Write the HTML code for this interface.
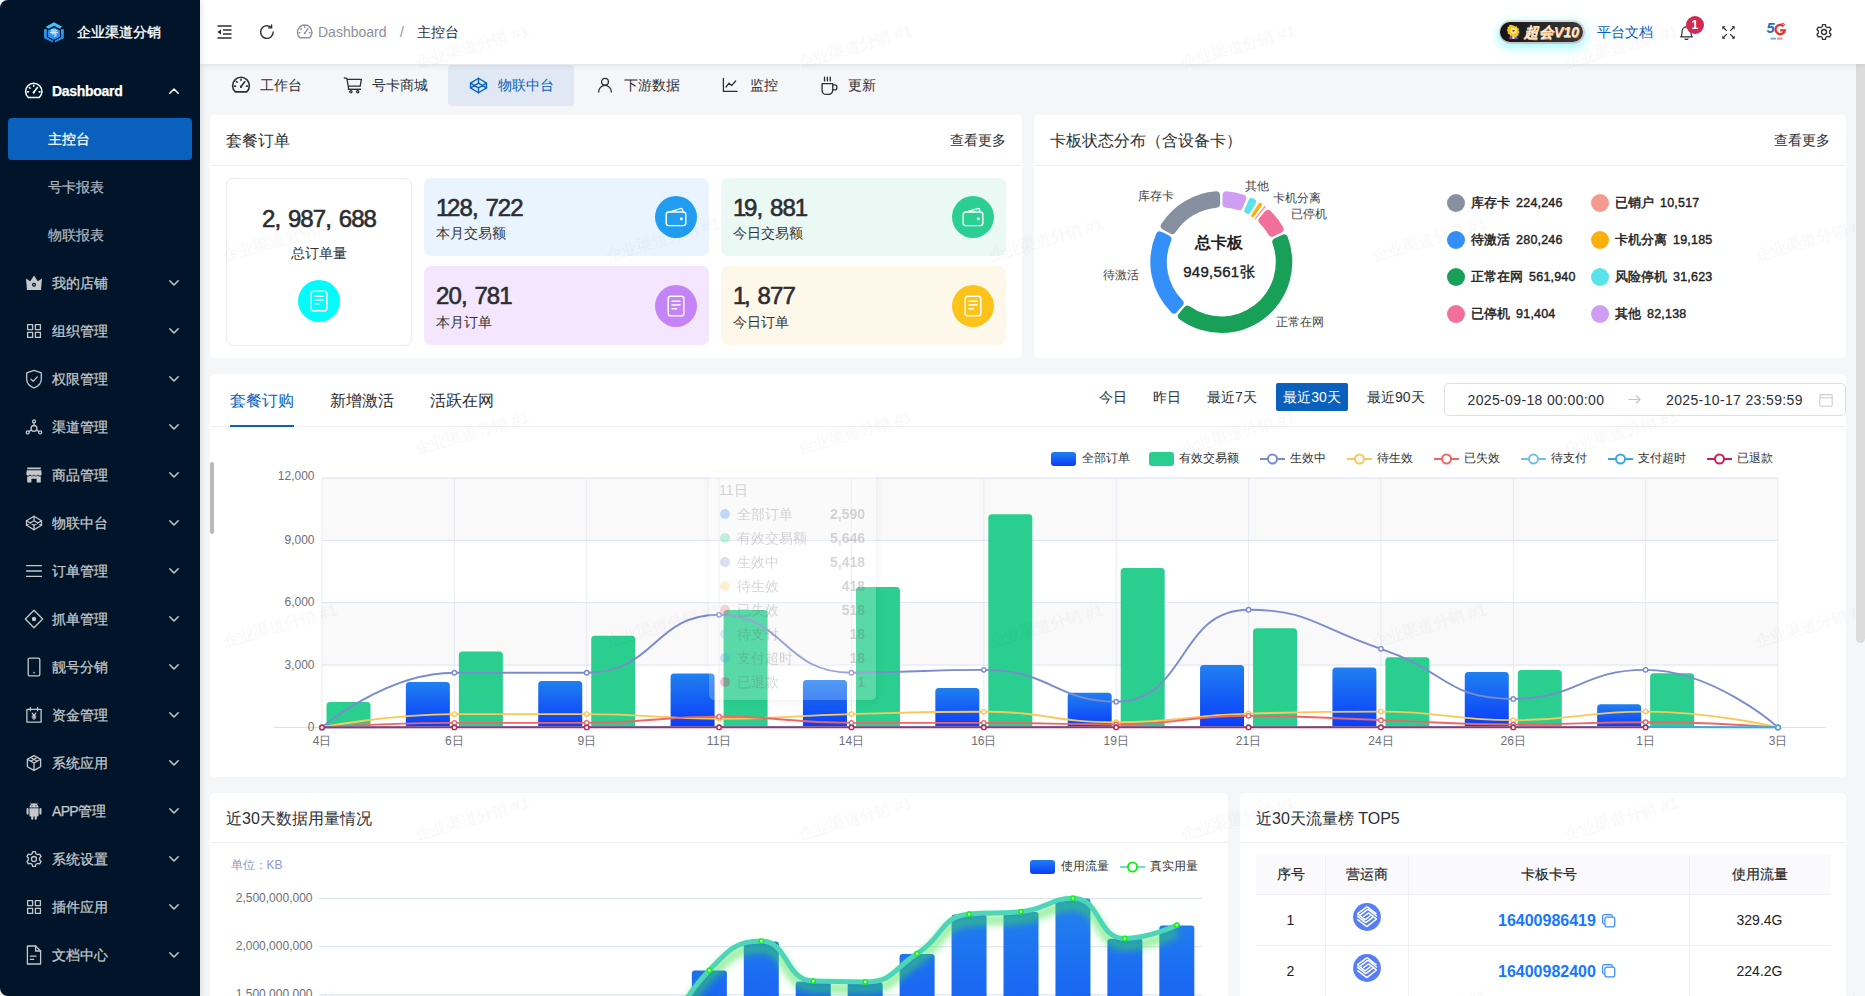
<!DOCTYPE html>
<html lang="zh">
<head>
<meta charset="utf-8">
<title>Dashboard</title>
<style>
*{box-sizing:border-box;margin:0;padding:0}
html,body{width:1865px;height:996px;overflow:hidden}html{background:#f4f4f4}
body{font-family:"Liberation Sans",sans-serif;font-size:14px;color:#2c2f36;background:#f5f6f8;position:relative}
.abs{position:absolute}
svg{display:block;overflow:visible}
/* sidebar */
#side{position:absolute;left:0;top:0;width:200px;height:996px;background:#001529;border-radius:8px 0 0 8px;box-shadow:2px 0 6px rgba(0,21,41,.10);z-index:5}
#side .logo{position:absolute;left:44px;top:21.5px;width:20px;height:21px}
#side .brand{position:absolute;left:77px;top:22px;height:20px;line-height:20px;font-size:14px;color:#fff;white-space:nowrap;-webkit-text-stroke:0.35px #fff}
.mi{position:absolute;left:0;width:200px;height:48px;color:#c6c8cb}
.mi .ic{position:absolute;left:26px;top:16px;width:16px;height:16px}
.mi .tx{position:absolute;left:52px;top:14px;line-height:20px;font-size:14px;white-space:nowrap;-webkit-text-stroke:0.25px currentColor}
.mi .ch{position:absolute;left:169px;top:21px;width:10px;height:6px}
.mi.sub .tx{left:48px;color:#b0b4ba}
.mi.act{left:8px;width:184px;height:42px;background:#0960bd;border-radius:4px;top:118px}
.mi.act .tx{left:40px;top:11px;color:#fff}
/* header */
#hdr{position:absolute;left:200px;top:0;width:1665px;height:64px;background:#fff;box-shadow:0 1px 5px rgba(0,21,41,.10);z-index:3}
.card{position:absolute;background:#fff;border-radius:4px}
.ctitle{position:absolute;left:16px;top:14px;font-size:16px;line-height:22px;color:#2c2f36;white-space:nowrap}
.cmore{position:absolute;right:16px;top:14px;font-size:14px;line-height:20px;color:#2c2f36;white-space:nowrap}
.cdiv{position:absolute;left:0;right:0;top:49px;height:1px;background:#eef0f4}
.t{position:absolute;white-space:nowrap}
</style>
</head>
<body>
<div id="side">
<div class="logo"><svg viewBox="0 0 20 21" width="20" height="21"><defs><linearGradient id="lg1" x1="0" y1="0" x2="0" y2="1"><stop offset="0" stop-color="#2fa8fb"/><stop offset="1" stop-color="#1c84f2"/></linearGradient></defs><path fill="#3cc6ff" d="M1.900 4.800 L9.950 0.300 L18.100 4.800 L15.800 6.800 L9.950 3.700 L4.200 6.800 Z"/><path fill="url(#lg1)" d="M0.100 7.300 H2.800 V15.300 L9 18.400 V20.600 L0.100 16.200 Z M19.800 7.300 H17.100 V15.300 L10.900 18.400 V20.600 L19.800 16.200 Z"/><path fill="#2b93f5" d="M9.950 5.500 L15.900 8.600 V14.700 L9.950 17.800 L4 14.700 V8.600 Z"/><path fill="none" stroke="#e8f4ff" stroke-width="0.950" stroke-linejoin="round" stroke-linecap="round" d="M7.700 7.900h4.600v1.300H7.700z M6.400 10.600h7.200 M8.100 10.600 V11.900 H12.100 Q12.700 14.100 10.500 14.500"/></svg></div><div class="brand">企业渠道分销</div>
<div class="mi" style="top:67px;color:#fff"><div class="ic" style="left:24.300px;top:13.800px;width:19.500px;height:19.500px"><svg viewBox="0 0 16 16" width="100%" height="100%" ><path fill="none" stroke="currentColor" stroke-width="1.3" stroke-linecap="round" stroke-linejoin="round" d="M3.500 13.500 A6.700 6.700 0 1 1 12.500 13.500 Z"/><path fill="none" stroke="currentColor" stroke-width="1.3" stroke-linecap="round" stroke-linejoin="round" d="M8 9.300 L11 5.400"/><circle cx="8" cy="9.400" r="0.950" fill="currentColor"/><path fill="none" stroke="currentColor" stroke-width="1.3" stroke-linecap="round" stroke-linejoin="round" stroke-width="1" d="M8 3.500v.7M4.400 5.300l.5.5M2.900 8.900h.7M12.400 8.900h.7"/></svg></div><div class="tx" style="font-weight:bold;letter-spacing:-0.3px">Dashboard</div><div class="ch"><svg viewBox="0 0 10 6" width="100%" height="100%"><path fill="none" stroke="currentColor" stroke-width="1.5" stroke-linecap="round" stroke-linejoin="round" d="M0.8 5.2 L5 1 L9.2 5.2"/></svg></div></div>
<div class="mi act"><div class="tx">主控台</div></div>
<div class="mi sub" style="top:163px"><div class="tx">号卡报表</div></div>
<div class="mi sub" style="top:211px"><div class="tx">物联报表</div></div>
<div class="mi" style="top:259px"><div class="ic"><svg viewBox="0 0 16 16" width="100%" height="100%" ><path fill="currentColor" d="M0 3.400 L4.200 6.300 L8 0.600 L11.800 6.300 L16 3.400 L15 14.900 H1 Z"/><circle cx="8" cy="9.800" r="2" fill="#001529"/><circle cx="8" cy="9.800" r="0.800" fill="currentColor"/></svg></div><div class="tx">我的店铺</div><div class="ch"><svg viewBox="0 0 10 6" width="100%" height="100%"><path fill="none" stroke="currentColor" stroke-width="1.5" stroke-linecap="round" stroke-linejoin="round" d="M0.8 0.8 L5 5 L9.2 0.8"/></svg></div></div>
<div class="mi" style="top:307px"><div class="ic"><svg viewBox="0 0 16 16" width="100%" height="100%" ><rect fill="none" stroke="currentColor" stroke-width="1.3" stroke-linecap="round" stroke-linejoin="round" x="1.6" y="1.6" width="5" height="5"/><rect fill="none" stroke="currentColor" stroke-width="1.3" stroke-linecap="round" stroke-linejoin="round" x="9.4" y="1.6" width="5" height="5"/><rect fill="none" stroke="currentColor" stroke-width="1.3" stroke-linecap="round" stroke-linejoin="round" x="1.6" y="9.4" width="5" height="5"/><rect fill="none" stroke="currentColor" stroke-width="1.3" stroke-linecap="round" stroke-linejoin="round" x="9.4" y="9.4" width="5" height="5"/></svg></div><div class="tx">组织管理</div><div class="ch"><svg viewBox="0 0 10 6" width="100%" height="100%"><path fill="none" stroke="currentColor" stroke-width="1.5" stroke-linecap="round" stroke-linejoin="round" d="M0.8 0.8 L5 5 L9.2 0.8"/></svg></div></div>
<div class="mi" style="top:355px"><div class="ic"><svg viewBox="0 0 16 16" width="100%" height="100%" ><path fill="none" stroke="currentColor" stroke-width="1.3" stroke-linecap="round" stroke-linejoin="round" d="M8 -0.600 L15.300 1.800 V8.200 C15.300 12.300 12 15.300 8 17 C4 15.300 0.700 12.300 0.700 8.200 V1.800 Z"/><path fill="none" stroke="currentColor" stroke-width="1.3" stroke-linecap="round" stroke-linejoin="round" d="M4.900 8.100 L7.200 10.400 L11.300 5.900"/></svg></div><div class="tx">权限管理</div><div class="ch"><svg viewBox="0 0 10 6" width="100%" height="100%"><path fill="none" stroke="currentColor" stroke-width="1.5" stroke-linecap="round" stroke-linejoin="round" d="M0.8 0.8 L5 5 L9.2 0.8"/></svg></div></div>
<div class="mi" style="top:403px"><div class="ic"><svg viewBox="0 0 16 16" width="100%" height="100%" ><circle fill="none" stroke="currentColor" stroke-width="1.3" stroke-linecap="round" stroke-linejoin="round" cx="8" cy="2.400" r="1.500"/><circle fill="none" stroke="currentColor" stroke-width="1.3" stroke-linecap="round" stroke-linejoin="round" cx="1.800" cy="13.400" r="1.500"/><circle fill="none" stroke="currentColor" stroke-width="1.3" stroke-linecap="round" stroke-linejoin="round" cx="14.200" cy="13.400" r="1.500"/><circle fill="none" stroke="currentColor" stroke-width="1.3" stroke-linecap="round" stroke-linejoin="round" cx="8" cy="9.400" r="2.900"/><path fill="none" stroke="currentColor" stroke-width="1.3" stroke-linecap="round" stroke-linejoin="round" d="M8 3.900v2.600M5.500 10.900l-2.400 1.600M10.500 10.900l2.400 1.600"/></svg></div><div class="tx">渠道管理</div><div class="ch"><svg viewBox="0 0 10 6" width="100%" height="100%"><path fill="none" stroke="currentColor" stroke-width="1.5" stroke-linecap="round" stroke-linejoin="round" d="M0.8 0.8 L5 5 L9.2 0.8"/></svg></div></div>
<div class="mi" style="top:451px"><div class="ic"><svg viewBox="0 0 16 16" width="100%" height="100%" ><path fill="currentColor" d="M1.200 0.500h13.600v1.700H1.200z M0.800 3.300h14.400l0.500 3.400a1.900 1.900 0 0 1-3.800 0.200a1.950 1.950 0 0 1-3.900 0a1.950 1.950 0 0 1-3.900 0a1.900 1.900 0 0 1-3.800-0.200z M1.200 9.400 Q3 9.900 4.400 8.800 Q6 10.100 8 8.800 Q10 10.100 11.600 8.800 Q13 9.900 14.800 9.400 V15.500 H10.600 V11.800 H5.400 V15.500 H1.200 Z"/></svg></div><div class="tx">商品管理</div><div class="ch"><svg viewBox="0 0 10 6" width="100%" height="100%"><path fill="none" stroke="currentColor" stroke-width="1.5" stroke-linecap="round" stroke-linejoin="round" d="M0.8 0.8 L5 5 L9.2 0.8"/></svg></div></div>
<div class="mi" style="top:499px"><div class="ic"><svg viewBox="0 0 16 16" width="100%" height="100%" ><path fill="none" stroke="currentColor" stroke-width="1.3" stroke-linecap="round" stroke-linejoin="round" d="M8 1.200 L15.500 5.700 V10.300 L8 14.800 L0.500 10.300 V5.700 Z"/><path fill="none" stroke="currentColor" stroke-width="1.3" stroke-linecap="round" stroke-linejoin="round" d="M0.500 5.700 L8 10.300 L15.500 5.700 M0.500 10.300 L8 5.700 L15.500 10.300 M8 1.200 V5.700 M8 10.300 V14.800"/></svg></div><div class="tx">物联中台</div><div class="ch"><svg viewBox="0 0 10 6" width="100%" height="100%"><path fill="none" stroke="currentColor" stroke-width="1.5" stroke-linecap="round" stroke-linejoin="round" d="M0.8 0.8 L5 5 L9.2 0.8"/></svg></div></div>
<div class="mi" style="top:547px"><div class="ic"><svg viewBox="0 0 16 16" width="100%" height="100%" ><path fill="none" stroke="currentColor" stroke-width="1.3" stroke-linecap="round" stroke-linejoin="round" stroke-width="1.4" stroke-linecap="butt" d="M0.6 2.6h14.8M0.6 8h14.8M0.6 13.4h14.8"/></svg></div><div class="tx">订单管理</div><div class="ch"><svg viewBox="0 0 10 6" width="100%" height="100%"><path fill="none" stroke="currentColor" stroke-width="1.5" stroke-linecap="round" stroke-linejoin="round" d="M0.8 0.8 L5 5 L9.2 0.8"/></svg></div></div>
<div class="mi" style="top:595px"><div class="ic"><svg viewBox="0 0 16 16" width="100%" height="100%" ><path fill="none" stroke="currentColor" stroke-width="1.3" stroke-linecap="round" stroke-linejoin="round" stroke-width="1.500" d="M8 -0.700 L16.700 8 L8 16.700 L-0.700 8 Z"/><circle cx="8" cy="8" r="2.200" fill="currentColor"/></svg></div><div class="tx">抓单管理</div><div class="ch"><svg viewBox="0 0 10 6" width="100%" height="100%"><path fill="none" stroke="currentColor" stroke-width="1.5" stroke-linecap="round" stroke-linejoin="round" d="M0.8 0.8 L5 5 L9.2 0.8"/></svg></div></div>
<div class="mi" style="top:643px"><div class="ic"><svg viewBox="0 0 16 16" width="100%" height="100%" ><rect fill="none" stroke="currentColor" stroke-width="1.3" stroke-linecap="round" stroke-linejoin="round" x="2.200" y="-0.900" width="11.600" height="17.800" rx="1.500"/><circle cx="8" cy="13.600" r="0.850" fill="currentColor"/></svg></div><div class="tx">靓号分销</div><div class="ch"><svg viewBox="0 0 10 6" width="100%" height="100%"><path fill="none" stroke="currentColor" stroke-width="1.5" stroke-linecap="round" stroke-linejoin="round" d="M0.8 0.8 L5 5 L9.2 0.8"/></svg></div></div>
<div class="mi" style="top:691px"><div class="ic"><svg viewBox="0 0 16 16" width="100%" height="100%" ><rect fill="none" stroke="currentColor" stroke-width="1.3" stroke-linecap="round" stroke-linejoin="round" x="0.900" y="2.400" width="14.200" height="12.800" /><path fill="none" stroke="currentColor" stroke-width="1.3" stroke-linecap="round" stroke-linejoin="round" d="M4.400 0.600v3.200M11.600 0.600v3.200"/><path fill="none" stroke="currentColor" stroke-width="1.3" stroke-linecap="round" stroke-linejoin="round" stroke-width="1" d="M6.200 6.200 L8 8.700 L9.800 6.200 M8 8.700v3.600M6.300 9.200h3.400M6.300 10.800h3.400"/></svg></div><div class="tx">资金管理</div><div class="ch"><svg viewBox="0 0 10 6" width="100%" height="100%"><path fill="none" stroke="currentColor" stroke-width="1.5" stroke-linecap="round" stroke-linejoin="round" d="M0.8 0.8 L5 5 L9.2 0.8"/></svg></div></div>
<div class="mi" style="top:739px"><div class="ic"><svg viewBox="0 0 16 16" width="100%" height="100%" ><path fill="none" stroke="currentColor" stroke-width="1.3" stroke-linecap="round" stroke-linejoin="round" stroke-width="1.400" d="M8 0.600 L14.600 4.300 V11.700 L8 15.400 L1.400 11.700 V4.300 Z"/><path fill="none" stroke="currentColor" stroke-width="1.3" stroke-linecap="round" stroke-linejoin="round" stroke-width="1.400" d="M1.400 4.300 L8 8 L14.600 4.300 M8 8 V15.400 M4.700 2.500 L11.300 6.200 M11.300 2.500 L4.700 6.200"/></svg></div><div class="tx">系统应用</div><div class="ch"><svg viewBox="0 0 10 6" width="100%" height="100%"><path fill="none" stroke="currentColor" stroke-width="1.5" stroke-linecap="round" stroke-linejoin="round" d="M0.8 0.8 L5 5 L9.2 0.8"/></svg></div></div>
<div class="mi" style="top:787px"><div class="ic"><svg viewBox="0 0 16 16" width="100%" height="100%" ><g transform="translate(8 8) scale(1.17) translate(-8 -8)"><path fill="currentColor" d="M4.1 5.6h7.8v6.2a.8.8 0 0 1-.8.8h-.7v2a.9.9 0 0 1-1.8 0v-2H7.4v2a.9.9 0 0 1-1.8 0v-2h-.7a.8.8 0 0 1-.8-.8z M1.6 6.4a.9.9 0 0 1 1.8 0v3.8a.9.9 0 0 1-1.8 0z M12.6 6.4a.9.9 0 0 1 1.8 0v3.8a.9.9 0 0 1-1.8 0z M4.1 5a3.9 3.6 0 0 1 7.8 0z"/><path stroke="currentColor" stroke-width=".7" stroke-linecap="round" d="M5.2 1.2l.8 1.2M10.8 1.2l-.8 1.2"/><circle cx="6.3" cy="3.5" r=".45" fill="#001529"/><circle cx="9.7" cy="3.5" r=".45" fill="#001529"/></g></svg></div><div class="tx"><span style="letter-spacing:-0.7px">APP</span>管理</div><div class="ch"><svg viewBox="0 0 10 6" width="100%" height="100%"><path fill="none" stroke="currentColor" stroke-width="1.5" stroke-linecap="round" stroke-linejoin="round" d="M0.8 0.8 L5 5 L9.2 0.8"/></svg></div></div>
<div class="mi" style="top:835px"><div class="ic"><svg viewBox="0 0 16 16" width="100%" height="100%" ><path fill="none" stroke="currentColor" stroke-width="1.3" stroke-linecap="round" stroke-linejoin="round" d="M9.86 2.61L9.43 0.64L6.57 0.64L6.14 2.61L4.26 3.70L2.34 3.08L0.91 5.56L2.40 6.91L2.40 9.09L0.91 10.44L2.34 12.92L4.26 12.30L6.14 13.39L6.57 15.36L9.43 15.36L9.86 13.39L11.74 12.30L13.66 12.92L15.09 10.44L13.60 9.09L13.60 6.91L15.09 5.56L13.66 3.08L11.74 3.70Z"/><circle fill="none" stroke="currentColor" stroke-width="1.3" stroke-linecap="round" stroke-linejoin="round" cx="8" cy="8" r="2.5"/></svg></div><div class="tx">系统设置</div><div class="ch"><svg viewBox="0 0 10 6" width="100%" height="100%"><path fill="none" stroke="currentColor" stroke-width="1.5" stroke-linecap="round" stroke-linejoin="round" d="M0.8 0.8 L5 5 L9.2 0.8"/></svg></div></div>
<div class="mi" style="top:883px"><div class="ic"><svg viewBox="0 0 16 16" width="100%" height="100%" ><rect fill="none" stroke="currentColor" stroke-width="1.3" stroke-linecap="round" stroke-linejoin="round" x="1.6" y="1.6" width="5" height="5"/><rect fill="none" stroke="currentColor" stroke-width="1.3" stroke-linecap="round" stroke-linejoin="round" x="9.4" y="1.6" width="5" height="5"/><rect fill="none" stroke="currentColor" stroke-width="1.3" stroke-linecap="round" stroke-linejoin="round" x="1.6" y="9.4" width="5" height="5"/><rect fill="none" stroke="currentColor" stroke-width="1.3" stroke-linecap="round" stroke-linejoin="round" x="9.4" y="9.4" width="5" height="5"/></svg></div><div class="tx">插件应用</div><div class="ch"><svg viewBox="0 0 10 6" width="100%" height="100%"><path fill="none" stroke="currentColor" stroke-width="1.5" stroke-linecap="round" stroke-linejoin="round" d="M0.8 0.8 L5 5 L9.2 0.8"/></svg></div></div>
<div class="mi" style="top:931px"><div class="ic"><svg viewBox="0 0 16 16" width="100%" height="100%" ><path fill="none" stroke="currentColor" stroke-width="1.3" stroke-linecap="round" stroke-linejoin="round" d="M1.400 -1h8.200l5 5V17H1.400z"/><path fill="none" stroke="currentColor" stroke-width="1.3" stroke-linecap="round" stroke-linejoin="round" d="M9.600 -1v5h5"/><path fill="none" stroke="currentColor" stroke-width="1.3" stroke-linecap="round" stroke-linejoin="round" d="M4.400 9.200h5.600M4.400 12.400h3.200"/></svg></div><div class="tx">文档中心</div><div class="ch"><svg viewBox="0 0 10 6" width="100%" height="100%"><path fill="none" stroke="currentColor" stroke-width="1.5" stroke-linecap="round" stroke-linejoin="round" d="M0.8 0.8 L5 5 L9.2 0.8"/></svg></div></div>
</div>
<div id="hdr">
<div class="abs" style="left:17px;top:25px;width:15px;height:14px;color:#2c2f36"><svg viewBox="0 0 15 14" width="15" height="14"><path fill="none" stroke="currentColor" stroke-width="1.3" d="M0.5 1h14M6 5h8.5M6 9h8.5M0.5 13h14"/><path fill="currentColor" d="M0.4 7 L4 4.4 V9.6 Z"/></svg></div>
<div class="abs" style="left:59px;top:24px;width:16px;height:16px;color:#2c2f36"><svg viewBox="0 0 16 16" width="16" height="16"><path fill="none" stroke="currentColor" stroke-width="1.4" stroke-linecap="round" d="M14.2 8 A6.3 6.3 0 1 1 11.8 3.1"/><path fill="none" stroke="currentColor" stroke-width="1.4" stroke-linecap="round" stroke-linejoin="round" d="M12.6 0.9 L12.6 3.9 L9.6 3.9"/></svg></div>
<div class="abs" style="left:96.200px;top:22.800px;width:17.400px;height:17.400px;color:#8c919a"><svg viewBox="0 0 16 16" width="100%" height="100%" ><path fill="none" stroke="currentColor" stroke-width="1.3" stroke-linecap="round" stroke-linejoin="round" d="M3.500 13.500 A6.700 6.700 0 1 1 12.500 13.500 Z"/><path fill="none" stroke="currentColor" stroke-width="1.3" stroke-linecap="round" stroke-linejoin="round" d="M8 9.300 L11 5.400"/><circle cx="8" cy="9.400" r="0.950" fill="currentColor"/><path fill="none" stroke="currentColor" stroke-width="1.3" stroke-linecap="round" stroke-linejoin="round" stroke-width="1" d="M8 3.500v.7M4.400 5.300l.5.5M2.900 8.900h.7M12.400 8.900h.7"/></svg></div>
<div class="t" style="left:118px;top:22px;line-height:20px;font-size:14px;color:#8c919a">Dashboard</div>
<div class="t" style="left:200px;top:22px;line-height:20px;font-size:14px;color:#8c919a">/</div>
<div class="t" style="left:217px;top:22px;line-height:20px;font-size:14px;color:#2c2f36">主控台</div>
<div class="abs" style="left:1298.6px;top:20.3px;width:86px;height:23.3px;border-radius:12px;background:linear-gradient(180deg,#dcdcdc,#c4c4c4);box-shadow:0 3px 9px 2px rgba(110,250,255,.55)"><div class="abs" style="left:1.8px;top:1.8px;right:1.8px;bottom:1.8px;border-radius:10px;background:linear-gradient(90deg,#151515,#3b3b3b)"></div>
<svg class="abs" style="left:7.8px;top:4.6px" width="15" height="15" viewBox="0 0 16 16"><path fill="#d04a8a" d="M4.6 10l2 1-.9 4.4-2.2-.8z"/><path fill="#4a6ad8" d="M11.4 10l-2 1 .9 4.4 2.2-.8z"/><path fill="#e8e8ff" d="M6.4 11h3.2l-.4 4H6.8z"/><path fill="#f7c51c" d="M8 0.4l1.5 1.3 2-.3.6 1.9 1.8.8-.5 1.9 1.100 1.600-1.300 1.500.300 1.900-1.900.600-.800 1.800-2-.400L8 12.600l-1.500-1.300-2 .400-.800-1.800-1.900-.600.300-1.900L.8 5.900 1.900 4.300 1.400 2.400l1.800-.8.600-1.900 2 .3z"/><circle cx="8" cy="6.300" r="3.200" fill="#ffe98a"/><path fill="#6b5a3a" d="M6.200 5.400h3.600L8 7.800z"/></svg>
<div class="t" style="left:25.4px;top:1.4px;line-height:20px;font-size:14.5px;font-weight:bold;font-style:italic;color:#ffe6d2;letter-spacing:-0.15px;text-shadow:0.5px 0.5px 0 #e8a860">超会V10</div></div>
<div class="t" style="left:1397px;top:22px;line-height:20px;font-size:14px;color:#0960bd">平台文档</div>
<div class="abs" style="left:1479.6px;top:25px;width:13px;height:15px;color:#2c2f36"><svg viewBox="0 0 13 15" width="13" height="15"><path fill="none" stroke="currentColor" stroke-width="1.2" stroke-linejoin="round" d="M0.8 11.8 H12.2 C10.9 10.7 10.9 9.3 10.9 6.3 A4.4 4.4 0 0 0 2.1 6.3 C2.1 9.3 2.1 10.7 0.8 11.8 Z"/><path fill="none" stroke="currentColor" stroke-width="1.2" stroke-linecap="round" d="M5 13.900 Q6.500 14.900 8 13.900"/></svg></div>
<div class="abs" style="left:1485.7px;top:15.8px;width:18.4px;height:18.4px;border-radius:10px;background:#d1294f;color:#fff;font-size:12px;font-weight:bold;line-height:18.4px;text-align:center">1</div>
<div class="abs" style="left:1521.5px;top:25.5px;width:13px;height:13px;color:#2c2f36"><svg viewBox="0 0 13 13" width="13" height="13"><path fill="none" stroke="currentColor" stroke-width="1.15" d="M1 1 L4.800 4.800 M12 1 L8.200 4.800 M1 12 L4.800 8.200 M12 12 L8.200 8.200"/><path fill="currentColor" d="M0.300 0.300H3.400L0.300 3.400Z M12.700 0.300V3.400L9.600 0.300Z M0.300 12.700V9.600L3.400 12.700Z M12.700 12.700H9.600L12.700 9.600Z"/></svg></div>
<div class="abs" style="left:1566px;top:21px;width:21px;height:20px"><svg viewBox="0 0 21 20" width="21" height="20"><text x="0.600" y="11.800" font-family="Liberation Sans" font-weight="bold" font-style="italic" font-size="14.500" fill="#1c6fc9" letter-spacing="-1">5</text><path fill="none" stroke="#e5322d" stroke-width="2.300" stroke-linecap="butt" d="M17.600 5.200 A4.700 4.700 0 1 0 18.900 9.300 H14.200"/><path fill="none" stroke="#e5322d" stroke-width="1" d="M14.500 3.300 Q17 1.200 19 3.600"/><rect x="4.500" y="16.600" width="5.500" height="2" fill="#6fb4e6"/><rect x="11" y="16.600" width="5.500" height="2" fill="#f08a8a"/></svg></div>
<div class="abs" style="left:1616px;top:23.8px;width:16px;height:16px;color:#2c2f36"><svg viewBox="0 0 16 16" width="100%" height="100%" ><path fill="none" stroke="currentColor" stroke-width="1.3" stroke-linecap="round" stroke-linejoin="round" d="M9.86 2.61L9.43 0.64L6.57 0.64L6.14 2.61L4.26 3.70L2.34 3.08L0.91 5.56L2.40 6.91L2.40 9.09L0.91 10.44L2.34 12.92L4.26 12.30L6.14 13.39L6.57 15.36L9.43 15.36L9.86 13.39L11.74 12.30L13.66 12.92L15.09 10.44L13.60 9.09L13.60 6.91L15.09 5.56L13.66 3.08L11.74 3.70Z"/><circle fill="none" stroke="currentColor" stroke-width="1.3" stroke-linecap="round" stroke-linejoin="round" cx="8" cy="8" r="2.5"/></svg></div>
</div>
<div class="abs" style="left:448px;top:65px;width:126px;height:41.400px;border-radius:4px;background:#dfe8f3"></div>
<div class="abs" style="left:231px;top:75.0px;width:20px;height:20px;color:#2c2f36"><svg viewBox="0 0 16 16" width="100%" height="100%" ><path fill="none" stroke="currentColor" stroke-width="1.3" stroke-linecap="round" stroke-linejoin="round" d="M3.500 13.500 A6.700 6.700 0 1 1 12.500 13.500 Z"/><path fill="none" stroke="currentColor" stroke-width="1.3" stroke-linecap="round" stroke-linejoin="round" d="M8 9.300 L11 5.400"/><circle cx="8" cy="9.400" r="0.950" fill="currentColor"/><path fill="none" stroke="currentColor" stroke-width="1.3" stroke-linecap="round" stroke-linejoin="round" stroke-width="1" d="M8 3.500v.7M4.400 5.300l.5.5M2.900 8.900h.7M12.400 8.900h.7"/></svg></div><div class="t" style="left:260px;top:75px;line-height:20px;font-size:14px;color:#2c2f36">工作台</div>
<div class="abs" style="left:344px;top:76.0px;width:18px;height:18px;color:#2c2f36"><svg viewBox="0 0 18 18" width="100%" height="100%"><path fill="none" stroke="currentColor" stroke-width="1.3" stroke-linecap="round" stroke-linejoin="round" stroke-width="1.4" d="M0.300 1.900l2.600.400 1.700 10.400 M3.200 3.400h14.200l-1.200 6.800H4.300"/><path fill="none" stroke="currentColor" stroke-width="1.400" d="M3.800 13.300H17"/><circle cx="6.900" cy="15.800" r="1.150" fill="none" stroke="currentColor" stroke-width="1.300"/><circle cx="13.700" cy="15.800" r="1.150" fill="none" stroke="currentColor" stroke-width="1.300"/></svg></div><div class="t" style="left:372px;top:75px;line-height:20px;font-size:14px;color:#2c2f36">号卡商城</div>
<div class="abs" style="left:470px;top:76.5px;width:17px;height:17px;color:#0960bd"><svg viewBox="0 0 16 16" width="100%" height="100%" ><path fill="none" stroke="currentColor" stroke-width="1.3" stroke-linecap="round" stroke-linejoin="round" d="M8 1.200 L15.500 5.700 V10.300 L8 14.800 L0.500 10.300 V5.700 Z"/><path fill="none" stroke="currentColor" stroke-width="1.3" stroke-linecap="round" stroke-linejoin="round" d="M0.500 5.700 L8 10.300 L15.500 5.700 M0.500 10.300 L8 5.700 L15.500 10.300 M8 1.200 V5.700 M8 10.300 V14.800"/></svg></div><div class="t" style="left:498px;top:75px;line-height:20px;font-size:14px;color:#0960bd">物联中台</div>
<div class="abs" style="left:597px;top:77.0px;width:16px;height:16px;color:#2c2f36"><svg viewBox="0 0 16 16" width="100%" height="100%"><circle fill="none" stroke="currentColor" stroke-width="1.3" stroke-linecap="round" stroke-linejoin="round" stroke-width="1.550" cx="8" cy="4.800" r="3.400"/><path fill="none" stroke="currentColor" stroke-width="1.3" stroke-linecap="round" stroke-linejoin="round" stroke-width="1.550" d="M1.600 15 A6.4 6.6 0 0 1 14.4 15"/></svg></div><div class="t" style="left:624px;top:75px;line-height:20px;font-size:14px;color:#2c2f36">下游数据</div>
<div class="abs" style="left:722px;top:77.0px;width:16px;height:16px;color:#2c2f36"><svg viewBox="0 0 16 16" width="100%" height="100%"><path fill="none" stroke="currentColor" stroke-width="1.3" stroke-linecap="round" stroke-linejoin="round" stroke-width="1.500" d="M1.400 1.400V14.400H15"/><path fill="none" stroke="currentColor" stroke-width="1.3" stroke-linecap="round" stroke-linejoin="round" stroke-width="1.500" d="M4 10 L7 6.2 L9.6 8.6 L13.6 4"/></svg></div><div class="t" style="left:750px;top:75px;line-height:20px;font-size:14px;color:#2c2f36">监控</div>
<div class="abs" style="left:820px;top:75.500px;width:18.500px;height:20.500px;color:#2c2f36"><svg viewBox="0 0 18 20" width="100%" height="100%"><path fill="none" stroke="currentColor" stroke-width="1.3" stroke-linecap="round" stroke-linejoin="round" stroke-width="1.5" d="M2 7.4h10.4v6.4a4.2 4.2 0 0 1-4.2 4.2h-2a4.2 4.2 0 0 1-4.2-4.2z M12.4 8.6h2a2 2 0 0 1 2 2v1a2 2 0 0 1-2 2h-2"/><path fill="none" stroke="currentColor" stroke-width="1.3" stroke-linecap="round" stroke-linejoin="round" stroke-width="1.3" d="M4.4 1.2v3.6M7.2 1.2v3.6M10 1.2v3.6"/></svg></div><div class="t" style="left:848px;top:75px;line-height:20px;font-size:14px;color:#2c2f36">更新</div>
<style>.num{position:absolute;white-space:nowrap;font-size:24px;line-height:28px;letter-spacing:-0.9px;color:#2b2d33;-webkit-text-stroke:0.6px #2b2d33}.cm{display:inline-block;width:13.5px;text-align:left}.d1{display:inline-block;width:11px;text-align:center}.lab{position:absolute;white-space:nowrap;font-size:14px;line-height:20px;color:#333}.sb{position:absolute;border-radius:7px}.circ{position:absolute;width:42px;height:42px;border-radius:21px}.circ svg{position:absolute}</style>
<div class="card" style="left:210px;top:115px;width:812px;height:243px"><div class="abs" style="left:0;top:1px;width:812px;height:241px">
<div class="ctitle">套餐订单</div><div class="cmore">查看更多</div><div class="cdiv"></div>
<div class="sb" style="left:16px;top:62px;width:186px;height:168px;border:1px solid #ececf0;background:#fff"></div>
<div class="num" style="left:16px;width:186px;text-align:center;top:89px">2<span class="cm">,</span>987<span class="cm">,</span>688</div>
<div class="lab" style="left:16px;width:186px;text-align:center;top:127px">总订单量</div>
<div class="circ" style="left:88px;top:164px;background:#02fcfc"><span style="position:absolute;left:12px;top:10px"><svg viewBox="0 0 18 22" width="18" height="22"><rect x="1.2" y="1.2" width="15.6" height="19.6" rx="2.4" fill="none" stroke="#fff" stroke-width="1.450"/><path stroke="#fff" stroke-width="1.450" stroke-linecap="round" d="M5 6.2h8M5 10h8M5 13.8h4.6"/></svg></span></div>
<div class="sb" style="left:214px;top:62px;width:285px;height:78px;background:#e9f4fe"></div>
<div class="num" style="left:226px;top:77.5px"><span class="d1">1</span>28<span class="cm">,</span>722</div>
<div class="lab" style="left:226px;top:107px">本月交易额</div>
<div class="circ" style="left:445px;top:80px;background:#209df0"><span style="position:absolute;left:10px;top:11px"><svg viewBox="0 0 22 20" width="22" height="20"><path fill="none" stroke="#fff" stroke-width="1.450" stroke-linejoin="round" d="M3.6 5.2 L15.6 1.6 Q17.4 1.2 17.6 3 L17.8 5"/><rect x="1.2" y="5" width="19.6" height="13.6" rx="2.6" fill="none" stroke="#fff" stroke-width="1.450"/><rect x="15" y="10.6" width="2.6" height="2.6" fill="#fff"/></svg></span></div>
<div class="sb" style="left:511px;top:62px;width:285px;height:78px;background:#ebf9f4"></div>
<div class="num" style="left:523px;top:77.5px"><span class="d1">1</span>9<span class="cm">,</span>88<span class="d1">1</span></div>
<div class="lab" style="left:523px;top:107px">今日交易额</div>
<div class="circ" style="left:742px;top:80px;background:#2bcf94"><span style="position:absolute;left:10px;top:11px"><svg viewBox="0 0 22 20" width="22" height="20"><path fill="none" stroke="#fff" stroke-width="1.450" stroke-linejoin="round" d="M3.6 5.2 L15.6 1.6 Q17.4 1.2 17.6 3 L17.8 5"/><rect x="1.2" y="5" width="19.6" height="13.6" rx="2.6" fill="none" stroke="#fff" stroke-width="1.450"/><rect x="15" y="10.6" width="2.6" height="2.6" fill="#fff"/></svg></span></div>
<div class="sb" style="left:214px;top:150px;width:285px;height:79px;background:#f4e7fd"></div>
<div class="num" style="left:226px;top:165.5px">20<span class="cm">,</span>78<span class="d1">1</span></div>
<div class="lab" style="left:226px;top:196px">本月订单</div>
<div class="circ" style="left:445px;top:169px;background:#c483f7"><span style="position:absolute;left:12px;top:10px"><svg viewBox="0 0 18 22" width="18" height="22"><rect x="1.2" y="1.2" width="15.6" height="19.6" rx="2.4" fill="none" stroke="#fff" stroke-width="1.450"/><path stroke="#fff" stroke-width="1.450" stroke-linecap="round" d="M5 6.2h8M5 10h8M5 13.8h4.6"/></svg></span></div>
<div class="sb" style="left:511px;top:150px;width:285px;height:79px;background:#fef8ea"></div>
<div class="num" style="left:523px;top:165.5px"><span class="d1">1</span><span class="cm">,</span>877</div>
<div class="lab" style="left:523px;top:196px">今日订单</div>
<div class="circ" style="left:742px;top:169px;background:#fcc41b"><span style="position:absolute;left:12px;top:10px"><svg viewBox="0 0 18 22" width="18" height="22"><rect x="1.2" y="1.2" width="15.6" height="19.6" rx="2.4" fill="none" stroke="#fff" stroke-width="1.450"/><path stroke="#fff" stroke-width="1.450" stroke-linecap="round" d="M5 6.2h8M5 10h8M5 13.8h4.6"/></svg></span></div>
</div></div>
<div class="card" style="left:1034px;top:115px;width:812px;height:243px"><div class="abs" style="left:0;top:1px;width:812px;height:241px">
<div class="ctitle">卡板状态分布（含设备卡）</div><div class="cmore">查看更多</div><div class="cdiv"></div>
<svg class="abs" style="left:0;top:0" width="812" height="241" viewBox="0 0 812 241"><path fill="#8790a0" d="M181.94 75.20A71 71 0 0 0 127.28 108.07Q125.24 111.51 128.74 113.45L136.17 117.58Q139.66 119.53 141.73 116.10A54.5 54.5 0 0 1 182.26 91.73Q186.25 91.51 186.18 87.51L186.01 79.01Q185.94 75.01 181.94 75.20Z"/><path fill="#348ff8" d="M122.26 117.54A71 71 0 0 0 137.30 196.41Q140.22 199.15 142.87 196.15L148.51 189.79Q151.16 186.80 148.27 184.04A54.5 54.5 0 0 1 137.01 125.01Q138.68 121.37 135.11 119.57L127.53 115.73Q123.96 113.92 122.26 117.54Z"/><path fill="#189f58" d="M145.46 203.36A71 71 0 0 0 253.72 120.91Q252.20 117.21 248.54 118.83L240.77 122.28Q237.12 123.90 238.60 127.61A54.5 54.5 0 0 1 155.94 190.57Q152.76 188.15 150.22 191.25L144.83 197.82Q142.30 200.92 145.46 203.36Z"/><path fill="#f0709b" d="M249.18 111.20A71 71 0 0 0 236.64 94.94Q233.68 92.24 231.07 95.27L225.52 101.71Q222.90 104.74 225.83 107.46A54.5 54.5 0 0 1 234.34 118.48Q236.23 122.00 239.82 120.24L247.46 116.50Q251.05 114.74 249.18 111.20Z"/><path fill="#f59a8e" d="M231.85 90.72A71 71 0 0 0 230.62 89.75L220.56 102.82A54.5 54.5 0 0 1 221.50 103.56Z"/><path fill="#fbb00c" d="M227.61 87.55A71 71 0 0 0 226.65 86.90Q225.52 86.17 224.80 87.30L217.36 98.94Q216.64 100.07 217.76 100.81A54.5 54.5 0 0 1 217.99 100.96Q219.09 101.73 219.87 100.64L227.93 89.42Q228.71 88.33 227.61 87.55Z"/><path fill="#58e4ea" d="M220.73 83.36A71 71 0 0 0 218.54 82.24Q215.98 81.05 214.83 83.64L210.46 93.55Q209.31 96.14 211.87 97.35A54.5 54.5 0 0 1 212.38 97.61Q214.86 98.98 216.29 96.54L221.77 87.19Q223.20 84.74 220.73 83.36Z"/><path fill="#cf9df1" d="M209.71 78.63A71 71 0 0 0 192.66 75.20Q188.66 75.01 188.59 79.01L188.42 87.51Q188.35 91.51 192.34 91.73A54.5 54.5 0 0 1 203.61 94.00Q207.38 95.34 208.86 91.62L211.99 83.71Q213.46 80.00 209.71 78.63Z"/></svg>
<div class="t" style="left:104px;top:72px;font-size:12px;line-height:16px;color:#444">库存卡</div>
<div class="t" style="left:211px;top:61.5px;font-size:12px;line-height:16px;color:#444">其他</div>
<div class="t" style="left:239px;top:73.5px;font-size:12px;line-height:16px;color:#444">卡机分离</div>
<div class="t" style="left:256.5px;top:89.5px;font-size:12px;line-height:16px;color:#444">已停机</div>
<div class="t" style="left:68.59999999999991px;top:151px;font-size:12px;line-height:16px;color:#444">待激活</div>
<div class="t" style="left:242px;top:197.7px;font-size:12px;line-height:16px;color:#444">正常在网</div>
<div class="t" style="left:124.99999999999996px;width:120px;text-align:center;top:116.30000000000001px;font-size:16px;line-height:22px;font-weight:bold;color:#222">总卡板</div>
<div class="t" style="left:124.99999999999996px;width:120px;text-align:center;top:144.5px;font-size:15px;line-height:22px;color:#222;-webkit-text-stroke:0.4px #222;letter-spacing:0.3px">949,561张</div>
<div class="abs" style="left:412.79999999999995px;top:77.5px;width:18px;height:18px;border-radius:9px;background:#8790a0"></div>
<div class="t" style="left:437.0999999999999px;top:77.5px;font-size:12.5px;line-height:18px;color:#222;-webkit-text-stroke:0.45px #222">库存卡<span style="margin-left:6px;font-weight:normal;-webkit-text-stroke:0.4px #222;letter-spacing:0.2px">224,246</span></div>
<div class="abs" style="left:412.79999999999995px;top:115px;width:18px;height:18px;border-radius:9px;background:#348ff8"></div>
<div class="t" style="left:437.0999999999999px;top:115px;font-size:12.5px;line-height:18px;color:#222;-webkit-text-stroke:0.45px #222">待激活<span style="margin-left:6px;font-weight:normal;-webkit-text-stroke:0.4px #222;letter-spacing:0.2px">280,246</span></div>
<div class="abs" style="left:412.79999999999995px;top:151.60000000000002px;width:18px;height:18px;border-radius:9px;background:#189f58"></div>
<div class="t" style="left:437.0999999999999px;top:151.60000000000002px;font-size:12.5px;line-height:18px;color:#222;-webkit-text-stroke:0.45px #222">正常在网<span style="margin-left:6px;font-weight:normal;-webkit-text-stroke:0.4px #222;letter-spacing:0.2px">561,940</span></div>
<div class="abs" style="left:412.79999999999995px;top:188.5px;width:18px;height:18px;border-radius:9px;background:#f0709b"></div>
<div class="t" style="left:437.0999999999999px;top:188.5px;font-size:12.5px;line-height:18px;color:#222;-webkit-text-stroke:0.45px #222">已停机<span style="margin-left:6px;font-weight:normal;-webkit-text-stroke:0.4px #222;letter-spacing:0.2px">91,404</span></div>
<div class="abs" style="left:556.7px;top:77.5px;width:18px;height:18px;border-radius:9px;background:#f59a8e"></div>
<div class="t" style="left:581.0px;top:77.5px;font-size:12.5px;line-height:18px;color:#222;-webkit-text-stroke:0.45px #222">已销户<span style="margin-left:6px;font-weight:normal;-webkit-text-stroke:0.4px #222;letter-spacing:0.2px">10,517</span></div>
<div class="abs" style="left:556.7px;top:115px;width:18px;height:18px;border-radius:9px;background:#fbb00c"></div>
<div class="t" style="left:581.0px;top:115px;font-size:12.5px;line-height:18px;color:#222;-webkit-text-stroke:0.45px #222">卡机分离<span style="margin-left:6px;font-weight:normal;-webkit-text-stroke:0.4px #222;letter-spacing:0.2px">19,185</span></div>
<div class="abs" style="left:556.7px;top:151.60000000000002px;width:18px;height:18px;border-radius:9px;background:#58e4ea"></div>
<div class="t" style="left:581.0px;top:151.60000000000002px;font-size:12.5px;line-height:18px;color:#222;-webkit-text-stroke:0.45px #222">风险停机<span style="margin-left:6px;font-weight:normal;-webkit-text-stroke:0.4px #222;letter-spacing:0.2px">31,623</span></div>
<div class="abs" style="left:556.7px;top:188.5px;width:18px;height:18px;border-radius:9px;background:#cf9df1"></div>
<div class="t" style="left:581.0px;top:188.5px;font-size:12.5px;line-height:18px;color:#222;-webkit-text-stroke:0.45px #222">其他<span style="margin-left:6px;font-weight:normal;-webkit-text-stroke:0.4px #222;letter-spacing:0.2px">82,138</span></div>
</div></div>
<div class="card" style="left:210px;top:374px;width:1636px;height:403px">
<div class="t" style="left:20px;top:16.200px;font-size:16px;line-height:22px;color:#0960bd">套餐订购</div>
<div class="t" style="left:120px;top:16.200px;font-size:16px;line-height:22px;color:#2c2f36">新增激活</div>
<div class="t" style="left:220px;top:16.200px;font-size:16px;line-height:22px;color:#2c2f36">活跃在网</div>
<div class="abs" style="left:0;right:0;top:52px;height:1px;background:#eef0f4"></div>
<div class="abs" style="left:20px;top:51px;width:64px;height:2px;background:#0960bd"></div>
<div class="t" style="left:888.5px;top:13px;font-size:14px;line-height:20px;color:#2c2f36">今日</div>
<div class="t" style="left:943px;top:13px;font-size:14px;line-height:20px;color:#2c2f36">昨日</div>
<div class="t" style="left:997px;top:13px;font-size:14px;line-height:20px;color:#2c2f36">最近7天</div>
<div class="abs" style="left:1066px;top:9px;width:72px;height:28px;border-radius:2px;background:#0960bd;color:#fff;font-size:14px;line-height:28px;text-align:center;white-space:nowrap">最近30天</div>
<div class="t" style="left:1157px;top:13px;font-size:14px;line-height:20px;color:#2c2f36">最近90天</div>
<div class="abs" style="left:1234px;top:9px;width:402px;height:33px;border:1px solid #dcdfe6;border-radius:5px;background:#fff"></div>
<div class="t" style="left:1257.5px;top:15.5px;font-size:14px;line-height:20px;color:#2c2f36;letter-spacing:0.36px">2025-09-18 00:00:00</div>
<div class="t" style="left:1456px;top:15.5px;font-size:14px;line-height:20px;color:#2c2f36;letter-spacing:0.36px">2025-10-17 23:59:59</div>
<svg class="abs" style="left:1418px;top:20px" width="13" height="11" viewBox="0 0 13 11"><path fill="none" stroke="#c0c4cc" stroke-width="1.1" d="M0.5 5.5h11.5M8 1.5l4 4-4 4"/></svg>
<svg class="abs" style="left:1609px;top:19px" width="14" height="14" viewBox="0 0 14 14"><rect x="0.8" y="1.6" width="12.4" height="11.6" rx="1.4" fill="none" stroke="#c8ccd2" stroke-width="1.1"/><path stroke="#c8ccd2" stroke-width="1.1" d="M0.8 4.8h12.4"/></svg>
<div class="abs" style="left:0;top:88px;width:4px;height:72px;background:#b9b9b9;border-radius:2px"></div>
<svg class="abs" style="left:0;top:0" width="1636" height="403" viewBox="210 374 1636 403"><defs><linearGradient id="gb" x1="0" y1="0" x2="0" y2="1"><stop offset="0" stop-color="#2080f0"/><stop offset="1" stop-color="#0a3cfa"/></linearGradient></defs><rect x="322" y="478.00" width="1456" height="62.35" fill="#f9f9fa"/><rect x="322" y="602.70" width="1456" height="62.35" fill="#f9f9fa"/><path d="M322.00 478.0V727.4" stroke="#e8ebf2" stroke-width="1" fill="none"/><path d="M454.36 478.0V727.4" stroke="#e8ebf2" stroke-width="1" fill="none"/><path d="M586.73 478.0V727.4" stroke="#e8ebf2" stroke-width="1" fill="none"/><path d="M719.09 478.0V727.4" stroke="#e8ebf2" stroke-width="1" fill="none"/><path d="M851.45 478.0V727.4" stroke="#e8ebf2" stroke-width="1" fill="none"/><path d="M983.82 478.0V727.4" stroke="#e8ebf2" stroke-width="1" fill="none"/><path d="M1116.18 478.0V727.4" stroke="#e8ebf2" stroke-width="1" fill="none"/><path d="M1248.55 478.0V727.4" stroke="#e8ebf2" stroke-width="1" fill="none"/><path d="M1380.91 478.0V727.4" stroke="#e8ebf2" stroke-width="1" fill="none"/><path d="M1513.27 478.0V727.4" stroke="#e8ebf2" stroke-width="1" fill="none"/><path d="M1645.64 478.0V727.4" stroke="#e8ebf2" stroke-width="1" fill="none"/><path d="M1778.00 478.0V727.4" stroke="#e8ebf2" stroke-width="1" fill="none"/><path d="M322 665.05H1778" stroke="#dbe2f0" stroke-width="1" fill="none"/><path d="M322 602.70H1778" stroke="#dbe2f0" stroke-width="1" fill="none"/><path d="M322 540.35H1778" stroke="#dbe2f0" stroke-width="1" fill="none"/><path d="M322 478.00H1778" stroke="#dbe2f0" stroke-width="1" fill="none"/><path d="M274 727.4H1826" stroke="#cfe0f6" stroke-width="1" fill="none"/><path fill="#2acf8f" d="M326.50 727.4V705.40Q326.50 701.90 330.00 701.90H367.00Q370.50 701.90 370.50 705.40V727.4Z"/><path fill="url(#gb)" d="M405.86 727.4V685.59Q405.86 682.09 409.36 682.09H446.36Q449.86 682.09 449.86 685.59V727.4Z"/><path fill="#2acf8f" d="M458.86 727.4V655.04Q458.86 651.54 462.36 651.54H499.36Q502.86 651.54 502.86 655.04V727.4Z"/><path fill="url(#gb)" d="M538.23 727.4V684.55Q538.23 681.05 541.73 681.05H578.73Q582.23 681.05 582.23 684.55V727.4Z"/><path fill="#2acf8f" d="M591.23 727.4V639.14Q591.23 635.64 594.73 635.64H631.73Q635.23 635.64 635.23 639.14V727.4Z"/><path fill="url(#gb)" d="M670.59 727.4V677.07Q670.59 673.57 674.09 673.57H711.09Q714.59 673.57 714.59 677.07V727.4Z"/><path fill="#2acf8f" d="M723.59 727.4V613.56Q723.59 610.06 727.09 610.06H764.09Q767.59 610.06 767.59 613.56V727.4Z"/><path fill="url(#gb)" d="M802.95 727.4V683.51Q802.95 680.01 806.45 680.01H843.45Q846.95 680.01 846.95 683.51V727.4Z"/><path fill="#2acf8f" d="M855.95 727.4V590.40Q855.95 586.90 859.45 586.90H896.45Q899.95 586.90 899.95 590.40V727.4Z"/><path fill="url(#gb)" d="M935.32 727.4V691.62Q935.32 688.12 938.82 688.12H975.82Q979.32 688.12 979.32 691.62V727.4Z"/><path fill="#2acf8f" d="M988.32 727.4V517.77Q988.32 514.27 991.82 514.27H1028.82Q1032.32 514.27 1032.32 517.77V727.4Z"/><path fill="url(#gb)" d="M1067.68 727.4V696.19Q1067.68 692.69 1071.18 692.69H1108.18Q1111.68 692.69 1111.68 696.19V727.4Z"/><path fill="#2acf8f" d="M1120.68 727.4V571.49Q1120.68 567.99 1124.18 567.99H1161.18Q1164.68 567.99 1164.68 571.49V727.4Z"/><path fill="url(#gb)" d="M1200.05 727.4V668.55Q1200.05 665.05 1203.55 665.05H1240.55Q1244.05 665.05 1244.05 668.55V727.4Z"/><path fill="#2acf8f" d="M1253.05 727.4V631.76Q1253.05 628.26 1256.55 628.26H1293.55Q1297.05 628.26 1297.05 631.76V727.4Z"/><path fill="url(#gb)" d="M1332.41 727.4V670.94Q1332.41 667.44 1335.91 667.44H1372.91Q1376.41 667.44 1376.41 670.94V727.4Z"/><path fill="#2acf8f" d="M1385.41 727.4V660.65Q1385.41 657.15 1388.91 657.15H1425.91Q1429.41 657.15 1429.41 660.65V727.4Z"/><path fill="url(#gb)" d="M1464.77 727.4V675.62Q1464.77 672.12 1468.27 672.12H1505.27Q1508.77 672.12 1508.77 675.62V727.4Z"/><path fill="#2acf8f" d="M1517.77 727.4V673.54Q1517.77 670.04 1521.27 670.04H1558.27Q1561.77 670.04 1561.77 673.54V727.4Z"/><path fill="url(#gb)" d="M1597.14 727.4V707.79Q1597.14 704.29 1600.64 704.29H1637.64Q1641.14 704.29 1641.14 707.79V727.4Z"/><path fill="#2acf8f" d="M1650.14 727.4V676.66Q1650.14 673.16 1653.64 673.16H1690.64Q1694.14 673.16 1694.14 676.66V727.4Z"/><path d="M322.00 727.40C322.00 727.40 385.58 672.74 454.36 672.74C517.94 672.74 523.44 672.74 586.73 672.74C655.81 672.74 652.91 614.80 719.09 614.80C785.27 614.80 782.38 672.74 851.45 672.74C914.75 672.74 918.56 669.83 983.82 669.83C1050.92 669.83 1055.56 701.63 1116.18 701.63C1187.93 701.63 1177.25 609.77 1248.55 609.77C1309.61 609.77 1315.56 626.83 1380.91 648.84C1447.92 671.41 1445.66 698.93 1513.27 698.93C1578.02 698.93 1581.54 669.83 1645.64 669.83C1713.90 669.83 1778.00 727.40 1778.00 727.40" fill="none" stroke="#7a8bd0" stroke-width="1.9"/><circle cx="322.00" cy="727.40" r="2.2" fill="#fff" stroke="#7a8bd0" stroke-width="1.4"/><circle cx="454.36" cy="672.74" r="2.2" fill="#fff" stroke="#7a8bd0" stroke-width="1.4"/><circle cx="586.73" cy="672.74" r="2.2" fill="#fff" stroke="#7a8bd0" stroke-width="1.4"/><circle cx="719.09" cy="614.80" r="2.2" fill="#fff" stroke="#7a8bd0" stroke-width="1.4"/><circle cx="851.45" cy="672.74" r="2.2" fill="#fff" stroke="#7a8bd0" stroke-width="1.4"/><circle cx="983.82" cy="669.83" r="2.2" fill="#fff" stroke="#7a8bd0" stroke-width="1.4"/><circle cx="1116.18" cy="701.63" r="2.2" fill="#fff" stroke="#7a8bd0" stroke-width="1.4"/><circle cx="1248.55" cy="609.77" r="2.2" fill="#fff" stroke="#7a8bd0" stroke-width="1.4"/><circle cx="1380.91" cy="648.84" r="2.2" fill="#fff" stroke="#7a8bd0" stroke-width="1.4"/><circle cx="1513.27" cy="698.93" r="2.2" fill="#fff" stroke="#7a8bd0" stroke-width="1.4"/><circle cx="1645.64" cy="669.83" r="2.2" fill="#fff" stroke="#7a8bd0" stroke-width="1.4"/><circle cx="1778.00" cy="727.40" r="2.2" fill="#fff" stroke="#7a8bd0" stroke-width="1.4"/><path d="M322.00 727.40C322.00 727.40 388.02 714.10 454.36 714.10C520.38 714.10 520.57 714.10 586.73 714.10C652.93 714.10 652.91 718.71 719.09 718.71C785.27 718.71 785.26 715.82 851.45 714.10C917.62 712.37 917.73 711.81 983.82 711.81C1050.10 711.81 1049.97 722.20 1116.18 722.20C1182.33 722.20 1182.30 715.56 1248.55 713.58C1314.66 711.60 1314.79 711.60 1380.91 711.60C1447.16 711.60 1447.09 720.13 1513.27 720.13C1579.45 720.13 1579.62 711.60 1645.64 711.60C1711.98 711.60 1778.00 727.40 1778.00 727.40" fill="none" stroke="#fac858" stroke-width="1.9"/><circle cx="322.00" cy="727.40" r="2.2" fill="#fff" stroke="#fac858" stroke-width="1.4"/><circle cx="454.36" cy="714.10" r="2.2" fill="#fff" stroke="#fac858" stroke-width="1.4"/><circle cx="586.73" cy="714.10" r="2.2" fill="#fff" stroke="#fac858" stroke-width="1.4"/><circle cx="719.09" cy="718.71" r="2.2" fill="#fff" stroke="#fac858" stroke-width="1.4"/><circle cx="851.45" cy="714.10" r="2.2" fill="#fff" stroke="#fac858" stroke-width="1.4"/><circle cx="983.82" cy="711.81" r="2.2" fill="#fff" stroke="#fac858" stroke-width="1.4"/><circle cx="1116.18" cy="722.20" r="2.2" fill="#fff" stroke="#fac858" stroke-width="1.4"/><circle cx="1248.55" cy="713.58" r="2.2" fill="#fff" stroke="#fac858" stroke-width="1.4"/><circle cx="1380.91" cy="711.60" r="2.2" fill="#fff" stroke="#fac858" stroke-width="1.4"/><circle cx="1513.27" cy="720.13" r="2.2" fill="#fff" stroke="#fac858" stroke-width="1.4"/><circle cx="1645.64" cy="711.60" r="2.2" fill="#fff" stroke="#fac858" stroke-width="1.4"/><circle cx="1778.00" cy="727.40" r="2.2" fill="#fff" stroke="#fac858" stroke-width="1.4"/><path d="M322.00 727.40C322.00 727.40 388.16 722.83 454.36 722.83C520.53 722.83 520.58 722.83 586.73 722.83C652.95 722.83 652.91 716.63 719.09 716.63C785.27 716.63 785.24 722.83 851.45 722.83C917.60 722.83 917.64 722.83 983.82 722.83C1050.00 722.83 1050.07 724.49 1116.18 724.49C1182.43 724.49 1182.31 715.87 1248.55 715.87C1314.67 715.87 1314.73 717.97 1380.91 720.13C1447.09 722.28 1447.08 724.49 1513.27 724.49C1579.44 724.49 1579.48 722.20 1645.64 722.20C1711.84 722.20 1778.00 727.40 1778.00 727.40" fill="none" stroke="#ee6666" stroke-width="1.9"/><circle cx="322.00" cy="727.40" r="2.2" fill="#fff" stroke="#ee6666" stroke-width="1.4"/><circle cx="454.36" cy="722.83" r="2.2" fill="#fff" stroke="#ee6666" stroke-width="1.4"/><circle cx="586.73" cy="722.83" r="2.2" fill="#fff" stroke="#ee6666" stroke-width="1.4"/><circle cx="719.09" cy="716.63" r="2.2" fill="#fff" stroke="#ee6666" stroke-width="1.4"/><circle cx="851.45" cy="722.83" r="2.2" fill="#fff" stroke="#ee6666" stroke-width="1.4"/><circle cx="983.82" cy="722.83" r="2.2" fill="#fff" stroke="#ee6666" stroke-width="1.4"/><circle cx="1116.18" cy="724.49" r="2.2" fill="#fff" stroke="#ee6666" stroke-width="1.4"/><circle cx="1248.55" cy="715.87" r="2.2" fill="#fff" stroke="#ee6666" stroke-width="1.4"/><circle cx="1380.91" cy="720.13" r="2.2" fill="#fff" stroke="#ee6666" stroke-width="1.4"/><circle cx="1513.27" cy="724.49" r="2.2" fill="#fff" stroke="#ee6666" stroke-width="1.4"/><circle cx="1645.64" cy="722.20" r="2.2" fill="#fff" stroke="#ee6666" stroke-width="1.4"/><circle cx="1778.00" cy="727.40" r="2.2" fill="#fff" stroke="#ee6666" stroke-width="1.4"/><path d="M322.00 727.40C322.00 727.40 388.18 727.03 454.36 727.03C520.55 727.03 520.55 727.03 586.73 727.03C652.91 727.03 652.91 727.03 719.09 727.03C785.27 727.03 785.27 727.03 851.45 727.03C917.64 727.03 917.64 727.03 983.82 727.03C1050.00 727.03 1050.00 727.03 1116.18 727.03C1182.36 727.03 1182.36 727.03 1248.55 727.03C1314.73 727.03 1314.73 727.03 1380.91 727.03C1447.09 727.03 1447.09 727.03 1513.27 727.03C1579.45 727.03 1579.45 727.03 1645.64 727.03C1711.82 727.03 1778.00 727.40 1778.00 727.40" fill="none" stroke="#73c0de" stroke-width="1.9"/><circle cx="322.00" cy="727.40" r="2.2" fill="#fff" stroke="#73c0de" stroke-width="1.4"/><circle cx="454.36" cy="727.03" r="2.2" fill="#fff" stroke="#73c0de" stroke-width="1.4"/><circle cx="586.73" cy="727.03" r="2.2" fill="#fff" stroke="#73c0de" stroke-width="1.4"/><circle cx="719.09" cy="727.03" r="2.2" fill="#fff" stroke="#73c0de" stroke-width="1.4"/><circle cx="851.45" cy="727.03" r="2.2" fill="#fff" stroke="#73c0de" stroke-width="1.4"/><circle cx="983.82" cy="727.03" r="2.2" fill="#fff" stroke="#73c0de" stroke-width="1.4"/><circle cx="1116.18" cy="727.03" r="2.2" fill="#fff" stroke="#73c0de" stroke-width="1.4"/><circle cx="1248.55" cy="727.03" r="2.2" fill="#fff" stroke="#73c0de" stroke-width="1.4"/><circle cx="1380.91" cy="727.03" r="2.2" fill="#fff" stroke="#73c0de" stroke-width="1.4"/><circle cx="1513.27" cy="727.03" r="2.2" fill="#fff" stroke="#73c0de" stroke-width="1.4"/><circle cx="1645.64" cy="727.03" r="2.2" fill="#fff" stroke="#73c0de" stroke-width="1.4"/><circle cx="1778.00" cy="727.40" r="2.2" fill="#fff" stroke="#73c0de" stroke-width="1.4"/><path d="M322.00 727.40C322.00 727.40 388.18 727.03 454.36 727.03C520.55 727.03 520.55 727.03 586.73 727.03C652.91 727.03 652.91 727.03 719.09 727.03C785.27 727.03 785.27 727.03 851.45 727.03C917.64 727.03 917.64 727.03 983.82 727.03C1050.00 727.03 1050.00 727.03 1116.18 727.03C1182.36 727.03 1182.36 727.03 1248.55 727.03C1314.73 727.03 1314.73 727.03 1380.91 727.03C1447.09 727.03 1447.09 727.03 1513.27 727.03C1579.45 727.03 1579.45 727.03 1645.64 727.03C1711.82 727.03 1778.00 727.40 1778.00 727.40" fill="none" stroke="#3ba9d8" stroke-width="1.9"/><circle cx="322.00" cy="727.40" r="2.2" fill="#fff" stroke="#3ba9d8" stroke-width="1.4"/><circle cx="454.36" cy="727.03" r="2.2" fill="#fff" stroke="#3ba9d8" stroke-width="1.4"/><circle cx="586.73" cy="727.03" r="2.2" fill="#fff" stroke="#3ba9d8" stroke-width="1.4"/><circle cx="719.09" cy="727.03" r="2.2" fill="#fff" stroke="#3ba9d8" stroke-width="1.4"/><circle cx="851.45" cy="727.03" r="2.2" fill="#fff" stroke="#3ba9d8" stroke-width="1.4"/><circle cx="983.82" cy="727.03" r="2.2" fill="#fff" stroke="#3ba9d8" stroke-width="1.4"/><circle cx="1116.18" cy="727.03" r="2.2" fill="#fff" stroke="#3ba9d8" stroke-width="1.4"/><circle cx="1248.55" cy="727.03" r="2.2" fill="#fff" stroke="#3ba9d8" stroke-width="1.4"/><circle cx="1380.91" cy="727.03" r="2.2" fill="#fff" stroke="#3ba9d8" stroke-width="1.4"/><circle cx="1513.27" cy="727.03" r="2.2" fill="#fff" stroke="#3ba9d8" stroke-width="1.4"/><circle cx="1645.64" cy="727.03" r="2.2" fill="#fff" stroke="#3ba9d8" stroke-width="1.4"/><circle cx="1778.00" cy="727.40" r="2.2" fill="#fff" stroke="#3ba9d8" stroke-width="1.4"/><path d="M322.00 727.40C322.00 727.40 388.18 727.38 454.36 727.38C520.55 727.38 520.55 727.38 586.73 727.38C652.91 727.38 652.91 727.38 719.09 727.38C785.27 727.38 785.27 727.38 851.45 727.38C917.64 727.38 917.64 727.38 983.82 727.38C1050.00 727.38 1050.00 727.38 1116.18 727.38C1182.36 727.38 1182.36 727.38 1248.55 727.38C1314.73 727.38 1314.73 727.38 1380.91 727.38C1447.09 727.38 1447.09 727.38 1513.27 727.38C1579.45 727.38 1645.64 727.38 1645.64 727.38" fill="none" stroke="#c8234f" stroke-width="1.9"/><circle cx="322.00" cy="727.40" r="2.2" fill="#fff" stroke="#c8234f" stroke-width="1.4"/><circle cx="454.36" cy="727.38" r="2.2" fill="#fff" stroke="#c8234f" stroke-width="1.4"/><circle cx="586.73" cy="727.38" r="2.2" fill="#fff" stroke="#c8234f" stroke-width="1.4"/><circle cx="719.09" cy="727.38" r="2.2" fill="#fff" stroke="#c8234f" stroke-width="1.4"/><circle cx="851.45" cy="727.38" r="2.2" fill="#fff" stroke="#c8234f" stroke-width="1.4"/><circle cx="983.82" cy="727.38" r="2.2" fill="#fff" stroke="#c8234f" stroke-width="1.4"/><circle cx="1116.18" cy="727.38" r="2.2" fill="#fff" stroke="#c8234f" stroke-width="1.4"/><circle cx="1248.55" cy="727.38" r="2.2" fill="#fff" stroke="#c8234f" stroke-width="1.4"/><circle cx="1380.91" cy="727.38" r="2.2" fill="#fff" stroke="#c8234f" stroke-width="1.4"/><circle cx="1513.27" cy="727.38" r="2.2" fill="#fff" stroke="#c8234f" stroke-width="1.4"/><circle cx="1645.64" cy="727.38" r="2.2" fill="#fff" stroke="#c8234f" stroke-width="1.4"/><text x="314.5" y="731.00" text-anchor="end" font-size="12" fill="#6e7079">0</text><text x="314.5" y="668.65" text-anchor="end" font-size="12" fill="#6e7079">3,000</text><text x="314.5" y="606.30" text-anchor="end" font-size="12" fill="#6e7079">6,000</text><text x="314.5" y="543.95" text-anchor="end" font-size="12" fill="#6e7079">9,000</text><text x="314.5" y="480.30" text-anchor="end" font-size="12" fill="#6e7079">12,000</text><text x="322.00" y="745" text-anchor="middle" font-size="12" fill="#6e7079">4日</text><text x="454.36" y="745" text-anchor="middle" font-size="12" fill="#6e7079">6日</text><text x="586.73" y="745" text-anchor="middle" font-size="12" fill="#6e7079">9日</text><text x="719.09" y="745" text-anchor="middle" font-size="12" fill="#6e7079">11日</text><text x="851.45" y="745" text-anchor="middle" font-size="12" fill="#6e7079">14日</text><text x="983.82" y="745" text-anchor="middle" font-size="12" fill="#6e7079">16日</text><text x="1116.18" y="745" text-anchor="middle" font-size="12" fill="#6e7079">19日</text><text x="1248.55" y="745" text-anchor="middle" font-size="12" fill="#6e7079">21日</text><text x="1380.91" y="745" text-anchor="middle" font-size="12" fill="#6e7079">24日</text><text x="1513.27" y="745" text-anchor="middle" font-size="12" fill="#6e7079">26日</text><text x="1645.64" y="745" text-anchor="middle" font-size="12" fill="#6e7079">1日</text><text x="1778.00" y="745" text-anchor="middle" font-size="12" fill="#6e7079">3日</text></svg>
<div class="abs" style="left:841px;top:77.5px;width:25px;height:14px;border-radius:3px;background:linear-gradient(180deg,#2080f0,#0a3cfa)"></div>
<div class="t" style="left:871.5px;top:76px;font-size:12px;line-height:16px;color:#333">全部订单</div>
<div class="abs" style="left:938.5999999999999px;top:77.5px;width:25px;height:14px;border-radius:3px;background:#2acf8f"></div>
<div class="t" style="left:969px;top:76px;font-size:12px;line-height:16px;color:#333">有效交易额</div>
<svg class="abs" style="left:1050px;top:77.5px" width="25" height="14" viewBox="0 0 25 14"><path d="M0 7H25" stroke="#7a8bd0" stroke-width="2"/><circle cx="12.5" cy="7" r="4.500" fill="#fff" stroke="#7a8bd0" stroke-width="2"/></svg>
<div class="t" style="left:1080px;top:76px;font-size:12px;line-height:16px;color:#333">生效中</div>
<svg class="abs" style="left:1137px;top:77.5px" width="25" height="14" viewBox="0 0 25 14"><path d="M0 7H25" stroke="#fac858" stroke-width="2"/><circle cx="12.5" cy="7" r="4.500" fill="#fff" stroke="#fac858" stroke-width="2"/></svg>
<div class="t" style="left:1167px;top:76px;font-size:12px;line-height:16px;color:#333">待生效</div>
<svg class="abs" style="left:1224px;top:77.5px" width="25" height="14" viewBox="0 0 25 14"><path d="M0 7H25" stroke="#ee6666" stroke-width="2"/><circle cx="12.5" cy="7" r="4.500" fill="#fff" stroke="#ee6666" stroke-width="2"/></svg>
<div class="t" style="left:1253.5px;top:76px;font-size:12px;line-height:16px;color:#333">已失效</div>
<svg class="abs" style="left:1311px;top:77.5px" width="25" height="14" viewBox="0 0 25 14"><path d="M0 7H25" stroke="#73c0de" stroke-width="2"/><circle cx="12.5" cy="7" r="4.500" fill="#fff" stroke="#73c0de" stroke-width="2"/></svg>
<div class="t" style="left:1341px;top:76px;font-size:12px;line-height:16px;color:#333">待支付</div>
<svg class="abs" style="left:1397.6px;top:77.5px" width="25" height="14" viewBox="0 0 25 14"><path d="M0 7H25" stroke="#3ba9d8" stroke-width="2"/><circle cx="12.5" cy="7" r="4.500" fill="#fff" stroke="#3ba9d8" stroke-width="2"/></svg>
<div class="t" style="left:1427.6px;top:76px;font-size:12px;line-height:16px;color:#333">支付超时</div>
<svg class="abs" style="left:1497px;top:77.5px" width="25" height="14" viewBox="0 0 25 14"><path d="M0 7H25" stroke="#c8234f" stroke-width="2"/><circle cx="12.5" cy="7" r="4.500" fill="#fff" stroke="#c8234f" stroke-width="2"/></svg>
<div class="t" style="left:1526.5px;top:76px;font-size:12px;line-height:16px;color:#333">已退款</div>
<div class="abs" style="left:499px;top:98px;width:167px;height:228px;border-radius:5px;background:rgba(255,255,255,.22);box-shadow:1px 2px 10px rgba(0,0,0,.06)"><div style="position:absolute;left:0;top:0;right:0;bottom:0;opacity:.27;color:#666;font-size:14px"><div class="t" style="left:10px;top:8px;line-height:20px">11日</div><div class="abs" style="left:11px;top:36.6px;width:10px;height:10px;border-radius:5px;background:#2080f0"></div><div class="t" style="left:27.5px;top:31.6px;line-height:20px">全部订单</div><div class="t" style="right:11px;top:31.6px;line-height:20px;font-weight:bold">2,590</div><div class="abs" style="left:11px;top:60.7px;width:10px;height:10px;border-radius:5px;background:#2acf8f"></div><div class="t" style="left:27.5px;top:55.7px;line-height:20px">有效交易额</div><div class="t" style="right:11px;top:55.7px;line-height:20px;font-weight:bold">5,646</div><div class="abs" style="left:11px;top:84.8px;width:10px;height:10px;border-radius:5px;background:#7a8bd0"></div><div class="t" style="left:27.5px;top:79.8px;line-height:20px">生效中</div><div class="t" style="right:11px;top:79.8px;line-height:20px;font-weight:bold">5,418</div><div class="abs" style="left:11px;top:108.9px;width:10px;height:10px;border-radius:5px;background:#fac858"></div><div class="t" style="left:27.5px;top:103.9px;line-height:20px">待生效</div><div class="t" style="right:11px;top:103.9px;line-height:20px;font-weight:bold">418</div><div class="abs" style="left:11px;top:133.0px;width:10px;height:10px;border-radius:5px;background:#ee6666"></div><div class="t" style="left:27.5px;top:128.0px;line-height:20px">已失效</div><div class="t" style="right:11px;top:128.0px;line-height:20px;font-weight:bold">518</div><div class="abs" style="left:11px;top:157.1px;width:10px;height:10px;border-radius:5px;background:#73c0de"></div><div class="t" style="left:27.5px;top:152.1px;line-height:20px">待支付</div><div class="t" style="right:11px;top:152.1px;line-height:20px;font-weight:bold">18</div><div class="abs" style="left:11px;top:181.2px;width:10px;height:10px;border-radius:5px;background:#3ba9d8"></div><div class="t" style="left:27.5px;top:176.2px;line-height:20px">支付超时</div><div class="t" style="right:11px;top:176.2px;line-height:20px;font-weight:bold">18</div><div class="abs" style="left:11px;top:205.3px;width:10px;height:10px;border-radius:5px;background:#c8234f"></div><div class="t" style="left:27.5px;top:200.3px;line-height:20px">已退款</div><div class="t" style="right:11px;top:200.3px;line-height:20px;font-weight:bold">1</div></div></div>
</div>
<div class="card" style="left:210px;top:793px;width:1018px;height:260px">
<div class="ctitle" style="top:15.300px">近30天数据用量情况</div><div class="cdiv"></div>
<div class="t" style="left:20.5px;top:64px;font-size:12px;line-height:16px;color:#8f98c9">单位：KB</div>
<svg class="abs" style="left:0;top:0" width="1018" height="260" viewBox="210 793 1018 260"><defs><linearGradient id="gb2" gradientUnits="userSpaceOnUse" x1="0" y1="898" x2="0" y2="1140"><stop offset="0" stop-color="#2483ee"/><stop offset="1" stop-color="#0a3cfa"/></linearGradient><filter id="glow" x="-10%" y="-50%" width="120%" height="250%"><feGaussianBlur stdDeviation="4"/></filter></defs><path d="M319 898.5H1202" stroke="#dbe2f0" stroke-width="1" fill="none"/><path d="M319 946.7H1202" stroke="#dbe2f0" stroke-width="1" fill="none"/><path d="M319 994.8H1202" stroke="#dbe2f0" stroke-width="1" fill="none"/><path fill="url(#gb2)" d="M691.86 1060V973.60Q691.86 970.60 694.86 970.60H723.86Q726.86 970.60 726.86 973.60V1060Z"/><path fill="url(#gb2)" d="M743.80 1060V944.40Q743.80 941.40 746.80 941.40H775.80Q778.80 941.40 778.80 944.40V1060Z"/><path fill="url(#gb2)" d="M795.74 1060V984.40Q795.74 981.40 798.74 981.40H827.74Q830.74 981.40 830.74 984.40V1060Z"/><path fill="url(#gb2)" d="M847.68 1060V985.20Q847.68 982.20 850.68 982.20H879.68Q882.68 982.20 882.68 985.20V1060Z"/><path fill="url(#gb2)" d="M899.62 1060V957.00Q899.62 954.00 902.62 954.00H931.62Q934.62 954.00 934.62 957.00V1060Z"/><path fill="url(#gb2)" d="M951.56 1060V917.40Q951.56 914.40 954.56 914.40H983.56Q986.56 914.40 986.56 917.40V1060Z"/><path fill="url(#gb2)" d="M1003.51 1060V915.00Q1003.51 912.00 1006.51 912.00H1035.51Q1038.51 912.00 1038.51 915.00V1060Z"/><path fill="url(#gb2)" d="M1055.45 1060V901.50Q1055.45 898.50 1058.45 898.50H1087.45Q1090.45 898.50 1090.45 901.50V1060Z"/><path fill="url(#gb2)" d="M1107.39 1060V941.80Q1107.39 938.80 1110.39 938.80H1139.39Q1142.39 938.80 1142.39 941.80V1060Z"/><path fill="url(#gb2)" d="M1159.33 1060V928.50Q1159.33 925.50 1162.33 925.50H1191.33Q1194.33 925.50 1194.33 928.50V1060Z"/><path d="M605.48 1130.00C605.48 1130.00 631.87 1091.28 657.42 1052.00C683.81 1011.43 677.21 1004.62 709.36 970.30C729.15 949.17 736.57 941.10 761.30 941.10C788.51 941.10 784.26 980.09 813.24 981.10C836.20 981.90 840.89 981.90 865.18 981.90C892.83 981.90 892.45 969.80 917.12 953.70C944.39 935.90 940.15 917.11 969.06 914.10C992.09 911.70 995.45 914.10 1021.01 911.70C1047.39 909.22 1049.60 898.20 1072.95 898.20C1101.54 898.20 1096.28 938.50 1124.89 938.50C1148.22 938.50 1176.83 925.20 1176.83 925.20" transform="translate(0,7)" fill="none" stroke="#3be04a" stroke-opacity=".75" stroke-width="7" filter="url(#glow)"/><path d="M605.48 1130.00C605.48 1130.00 631.87 1091.28 657.42 1052.00C683.81 1011.43 677.21 1004.62 709.36 970.30C729.15 949.17 736.57 941.10 761.30 941.10C788.51 941.10 784.26 980.09 813.24 981.10C836.20 981.90 840.89 981.90 865.18 981.90C892.83 981.90 892.45 969.80 917.12 953.70C944.39 935.90 940.15 917.11 969.06 914.10C992.09 911.70 995.45 914.10 1021.01 911.70C1047.39 909.22 1049.60 898.20 1072.95 898.20C1101.54 898.20 1096.28 938.50 1124.89 938.50C1148.22 938.50 1176.83 925.20 1176.83 925.20" fill="none" stroke="#4dd5b8" stroke-width="5" stroke-linecap="round"/><circle cx="709.36" cy="970.30" r="2.100" fill="#f6fff0" stroke="#08f808" stroke-width="1.600"/><circle cx="761.30" cy="941.10" r="2.100" fill="#f6fff0" stroke="#08f808" stroke-width="1.600"/><circle cx="813.24" cy="981.10" r="2.100" fill="#f6fff0" stroke="#08f808" stroke-width="1.600"/><circle cx="865.18" cy="981.90" r="2.100" fill="#f6fff0" stroke="#08f808" stroke-width="1.600"/><circle cx="917.12" cy="953.70" r="2.100" fill="#f6fff0" stroke="#08f808" stroke-width="1.600"/><circle cx="969.06" cy="914.10" r="2.100" fill="#f6fff0" stroke="#08f808" stroke-width="1.600"/><circle cx="1021.01" cy="911.70" r="2.100" fill="#f6fff0" stroke="#08f808" stroke-width="1.600"/><circle cx="1072.95" cy="898.20" r="2.100" fill="#f6fff0" stroke="#08f808" stroke-width="1.600"/><circle cx="1124.89" cy="938.50" r="2.100" fill="#f6fff0" stroke="#08f808" stroke-width="1.600"/><circle cx="1176.83" cy="925.20" r="2.100" fill="#f6fff0" stroke="#08f808" stroke-width="1.600"/><text x="312.5" y="902.1" text-anchor="end" font-size="12" fill="#6e7079">2,500,000,000</text><text x="312.5" y="950.3000000000001" text-anchor="end" font-size="12" fill="#6e7079">2,000,000,000</text><text x="312.5" y="998.4" text-anchor="end" font-size="12" fill="#6e7079">1,500,000,000</text></svg>
<div class="abs" style="left:820px;top:67px;width:25px;height:14px;border-radius:3px;background:linear-gradient(180deg,#2080f0,#0a3cfa)"></div>
<div class="t" style="left:850.5px;top:65px;font-size:12px;line-height:16px;color:#333">使用流量</div>
<svg class="abs" style="left:909.5px;top:67px" width="25" height="14" viewBox="0 0 25 14"><path d="M0 7H25" stroke="#4dd5b8" stroke-width="1.6"/><circle cx="12.5" cy="7" r="4.6" fill="#fff" stroke="#10f010" stroke-width="1.8"/></svg>
<div class="t" style="left:940px;top:65px;font-size:12px;line-height:16px;color:#333">真实用量</div>
</div>
<div class="card" style="left:1240px;top:793px;width:606px;height:260px">
<div class="ctitle" style="top:15.300px">近30天流量榜 TOP5</div><div class="cdiv"></div>
<div class="abs" style="left:16px;top:62px;width:574px;height:39px;background:#fafafc"></div>
<div class="abs" style="left:16px;top:101px;width:574px;height:1px;background:#eff0f5"></div>
<div class="abs" style="left:16px;top:152.29999999999995px;width:574px;height:1px;background:#eff0f5"></div>
<div class="abs" style="left:85px;top:62px;width:1px;height:160px;background:#eff0f5"></div>
<div class="abs" style="left:168px;top:62px;width:1px;height:160px;background:#eff0f5"></div>
<div class="abs" style="left:449px;top:62px;width:1px;height:160px;background:#eff0f5"></div>
<div class="t" style="left:16px;width:69px;text-align:center;top:71px;font-size:14px;line-height:20px;color:#222;-webkit-text-stroke:0.15px #222">序号</div>
<div class="t" style="left:85px;width:83px;text-align:center;top:71px;font-size:14px;line-height:20px;color:#222;-webkit-text-stroke:0.15px #222">营运商</div>
<div class="t" style="left:168px;width:281px;text-align:center;top:71px;font-size:14px;line-height:20px;color:#222;-webkit-text-stroke:0.15px #222">卡板卡号</div>
<div class="t" style="left:449px;width:141px;text-align:center;top:71px;font-size:14px;line-height:20px;color:#222;-webkit-text-stroke:0.15px #222">使用流量</div>
<div class="t" style="left:16px;width:69px;text-align:center;top:117.29999999999995px;font-size:14px;line-height:20px;color:#222">1</div>
<div class="abs" style="left:112.70000000000005px;top:109.79999999999995px;width:28px;height:28px"><svg viewBox="0 0 28 28" width="28" height="28"><circle cx="14" cy="14" r="13.9" fill="#587ef5"/><g fill="none" stroke="#fff" stroke-width="1.55" stroke-linecap="round" stroke-linejoin="round"><path d="M17 13 L12.6 16.4 Q12 16.8 11.4 16.4 L4.9 11.2 Q4.5 10.8 5 10.4 L13.4 4.2 Q14 3.8 14.6 4.2 L23 10.6"/><path d="M7.8 11.6 L14.3 6.7 Q14.9 6.3 15.5 6.7 L23.4 13"/><path d="M10.7 13.5 L15 10.3 Q15.6 9.9 16.2 10.3 L23 15.6 Q23.5 16 23 16.5 L14.4 23.2 Q13.8 23.6 13.2 23.2 L4.6 16.7"/><path d="M4.6 13.3 L12.2 19.2 Q12.8 19.6 13.4 19.2 L19.4 14.6"/></g></svg></div>
<div class="t" style="left:258px;top:118.09999999999995px;font-size:16px;line-height:20px;color:#1677ff;font-weight:bold">16400986419</div>
<div class="abs" style="left:361.5999999999999px;top:120.69999999999993px;width:14px;height:14px"><svg viewBox="0 0 14 14" width="14" height="14"><rect x="0.6" y="0.6" width="9.8" height="9.6" rx="1.9" fill="#fff" stroke="#3d8bff" stroke-width="1.15"/><rect x="2.9" y="3" width="9.8" height="9.8" rx="1.9" fill="#fff" stroke="#3d8bff" stroke-width="1.25"/></svg></div>
<div class="t" style="left:449px;width:141px;text-align:center;top:117.29999999999995px;font-size:14px;line-height:20px;color:#222">329.4G</div>
<div class="t" style="left:16px;width:69px;text-align:center;top:168px;font-size:14px;line-height:20px;color:#222">2</div>
<div class="abs" style="left:112.70000000000005px;top:161.39999999999998px;width:28px;height:28px"><svg viewBox="0 0 28 28" width="28" height="28"><circle cx="14" cy="14" r="13.9" fill="#587ef5"/><g fill="none" stroke="#fff" stroke-width="1.55" stroke-linecap="round" stroke-linejoin="round"><path d="M17 13 L12.6 16.4 Q12 16.8 11.4 16.4 L4.9 11.2 Q4.5 10.8 5 10.4 L13.4 4.2 Q14 3.8 14.6 4.2 L23 10.6"/><path d="M7.8 11.6 L14.3 6.7 Q14.9 6.3 15.5 6.7 L23.4 13"/><path d="M10.7 13.5 L15 10.3 Q15.6 9.9 16.2 10.3 L23 15.6 Q23.5 16 23 16.5 L14.4 23.2 Q13.8 23.6 13.2 23.2 L4.6 16.7"/><path d="M4.6 13.3 L12.2 19.2 Q12.8 19.6 13.4 19.2 L19.4 14.6"/></g></svg></div>
<div class="t" style="left:258px;top:168.8px;font-size:16px;line-height:20px;color:#1677ff;font-weight:bold">16400982400</div>
<div class="abs" style="left:361.5999999999999px;top:171.39999999999998px;width:14px;height:14px"><svg viewBox="0 0 14 14" width="14" height="14"><rect x="0.6" y="0.6" width="9.8" height="9.6" rx="1.9" fill="#fff" stroke="#3d8bff" stroke-width="1.15"/><rect x="2.9" y="3" width="9.8" height="9.8" rx="1.9" fill="#fff" stroke="#3d8bff" stroke-width="1.25"/></svg></div>
<div class="t" style="left:449px;width:141px;text-align:center;top:168px;font-size:14px;line-height:20px;color:#222">224.2G</div>
</div>
<div class="abs" style="left:1855px;top:64px;width:10px;height:932px;background:#f6f7f8"></div>
<div class="abs" style="left:1856px;top:50px;width:9px;height:593px;background:#dcdcdc;border-radius:5px"></div>
<div class="abs" style="left:200px;top:0;width:1655px;height:996px;overflow:hidden;z-index:20;pointer-events:none">
<div class="t" style="left:202px;top:35px;width:140px;height:24px;line-height:24px;text-align:center;font-size:16px;color:#000;-webkit-text-stroke:0.5px #000;opacity:.024;transform:rotate(-16deg)">企业渠道分销 #1</div>
<div class="t" style="left:585px;top:35px;width:140px;height:24px;line-height:24px;text-align:center;font-size:16px;color:#000;-webkit-text-stroke:0.5px #000;opacity:.024;transform:rotate(-16deg)">企业渠道分销 #1</div>
<div class="t" style="left:968px;top:35px;width:140px;height:24px;line-height:24px;text-align:center;font-size:16px;color:#000;-webkit-text-stroke:0.5px #000;opacity:.024;transform:rotate(-16deg)">企业渠道分销 #1</div>
<div class="t" style="left:1351px;top:35px;width:140px;height:24px;line-height:24px;text-align:center;font-size:16px;color:#000;-webkit-text-stroke:0.5px #000;opacity:.024;transform:rotate(-16deg)">企业渠道分销 #1</div>
<div class="t" style="left:10px;top:228px;width:140px;height:24px;line-height:24px;text-align:center;font-size:16px;color:#000;-webkit-text-stroke:0.5px #000;opacity:.024;transform:rotate(-16deg)">企业渠道分销 #1</div>
<div class="t" style="left:393px;top:228px;width:140px;height:24px;line-height:24px;text-align:center;font-size:16px;color:#000;-webkit-text-stroke:0.5px #000;opacity:.024;transform:rotate(-16deg)">企业渠道分销 #1</div>
<div class="t" style="left:776px;top:228px;width:140px;height:24px;line-height:24px;text-align:center;font-size:16px;color:#000;-webkit-text-stroke:0.5px #000;opacity:.024;transform:rotate(-16deg)">企业渠道分销 #1</div>
<div class="t" style="left:1159px;top:228px;width:140px;height:24px;line-height:24px;text-align:center;font-size:16px;color:#000;-webkit-text-stroke:0.5px #000;opacity:.024;transform:rotate(-16deg)">企业渠道分销 #1</div>
<div class="t" style="left:1542px;top:228px;width:140px;height:24px;line-height:24px;text-align:center;font-size:16px;color:#000;-webkit-text-stroke:0.5px #000;opacity:.024;transform:rotate(-16deg)">企业渠道分销 #1</div>
<div class="t" style="left:202px;top:421px;width:140px;height:24px;line-height:24px;text-align:center;font-size:16px;color:#000;-webkit-text-stroke:0.5px #000;opacity:.024;transform:rotate(-16deg)">企业渠道分销 #1</div>
<div class="t" style="left:585px;top:421px;width:140px;height:24px;line-height:24px;text-align:center;font-size:16px;color:#000;-webkit-text-stroke:0.5px #000;opacity:.024;transform:rotate(-16deg)">企业渠道分销 #1</div>
<div class="t" style="left:968px;top:421px;width:140px;height:24px;line-height:24px;text-align:center;font-size:16px;color:#000;-webkit-text-stroke:0.5px #000;opacity:.024;transform:rotate(-16deg)">企业渠道分销 #1</div>
<div class="t" style="left:1351px;top:421px;width:140px;height:24px;line-height:24px;text-align:center;font-size:16px;color:#000;-webkit-text-stroke:0.5px #000;opacity:.024;transform:rotate(-16deg)">企业渠道分销 #1</div>
<div class="t" style="left:10px;top:614px;width:140px;height:24px;line-height:24px;text-align:center;font-size:16px;color:#000;-webkit-text-stroke:0.5px #000;opacity:.024;transform:rotate(-16deg)">企业渠道分销 #1</div>
<div class="t" style="left:393px;top:614px;width:140px;height:24px;line-height:24px;text-align:center;font-size:16px;color:#000;-webkit-text-stroke:0.5px #000;opacity:.024;transform:rotate(-16deg)">企业渠道分销 #1</div>
<div class="t" style="left:776px;top:614px;width:140px;height:24px;line-height:24px;text-align:center;font-size:16px;color:#000;-webkit-text-stroke:0.5px #000;opacity:.024;transform:rotate(-16deg)">企业渠道分销 #1</div>
<div class="t" style="left:1159px;top:614px;width:140px;height:24px;line-height:24px;text-align:center;font-size:16px;color:#000;-webkit-text-stroke:0.5px #000;opacity:.024;transform:rotate(-16deg)">企业渠道分销 #1</div>
<div class="t" style="left:1542px;top:614px;width:140px;height:24px;line-height:24px;text-align:center;font-size:16px;color:#000;-webkit-text-stroke:0.5px #000;opacity:.024;transform:rotate(-16deg)">企业渠道分销 #1</div>
<div class="t" style="left:202px;top:807px;width:140px;height:24px;line-height:24px;text-align:center;font-size:16px;color:#000;-webkit-text-stroke:0.5px #000;opacity:.024;transform:rotate(-16deg)">企业渠道分销 #1</div>
<div class="t" style="left:585px;top:807px;width:140px;height:24px;line-height:24px;text-align:center;font-size:16px;color:#000;-webkit-text-stroke:0.5px #000;opacity:.024;transform:rotate(-16deg)">企业渠道分销 #1</div>
<div class="t" style="left:968px;top:807px;width:140px;height:24px;line-height:24px;text-align:center;font-size:16px;color:#000;-webkit-text-stroke:0.5px #000;opacity:.024;transform:rotate(-16deg)">企业渠道分销 #1</div>
<div class="t" style="left:1351px;top:807px;width:140px;height:24px;line-height:24px;text-align:center;font-size:16px;color:#000;-webkit-text-stroke:0.5px #000;opacity:.024;transform:rotate(-16deg)">企业渠道分销 #1</div>
<div class="t" style="left:10px;top:1000px;width:140px;height:24px;line-height:24px;text-align:center;font-size:16px;color:#000;-webkit-text-stroke:0.5px #000;opacity:.024;transform:rotate(-16deg)">企业渠道分销 #1</div>
<div class="t" style="left:393px;top:1000px;width:140px;height:24px;line-height:24px;text-align:center;font-size:16px;color:#000;-webkit-text-stroke:0.5px #000;opacity:.024;transform:rotate(-16deg)">企业渠道分销 #1</div>
<div class="t" style="left:776px;top:1000px;width:140px;height:24px;line-height:24px;text-align:center;font-size:16px;color:#000;-webkit-text-stroke:0.5px #000;opacity:.024;transform:rotate(-16deg)">企业渠道分销 #1</div>
<div class="t" style="left:1159px;top:1000px;width:140px;height:24px;line-height:24px;text-align:center;font-size:16px;color:#000;-webkit-text-stroke:0.5px #000;opacity:.024;transform:rotate(-16deg)">企业渠道分销 #1</div>
<div class="t" style="left:1542px;top:1000px;width:140px;height:24px;line-height:24px;text-align:center;font-size:16px;color:#000;-webkit-text-stroke:0.5px #000;opacity:.024;transform:rotate(-16deg)">企业渠道分销 #1</div>
</div>
</body></html>
